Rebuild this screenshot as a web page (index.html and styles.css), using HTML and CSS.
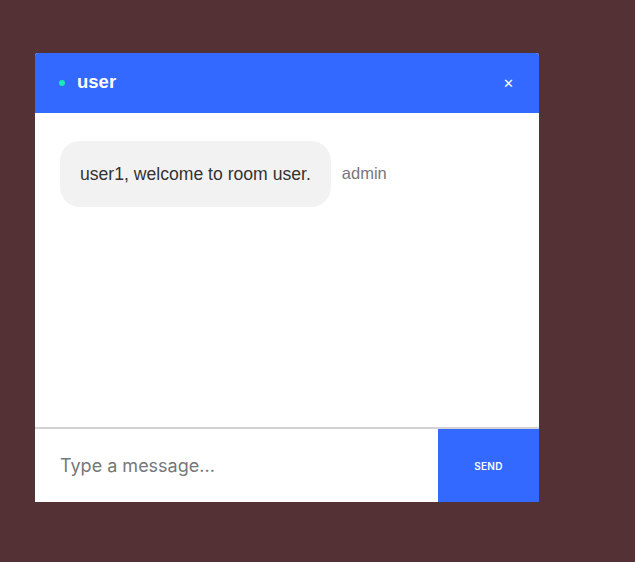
FILE: index.html
```html
<!DOCTYPE html>
<html>
<head>
<meta charset="utf-8">
<link rel="stylesheet" href="styles.css">
</head>
<body>
<div class="chat">
  <div class="chat-header">
    <div class="title"><span class="dot"></span><span class="name">user</span></div>
    <span class="close">&#x2715;</span>
  </div>
  <div class="messages">
    <div class="msg">
      <div class="bubble">user1, welcome to room user.</div>
      <span class="sender">admin</span>
    </div>
  </div>
  <form class="composer">
    <input class="input" type="text" placeholder="Type a message...">
    <button class="send" type="button">SEND</button>
  </form>
</div>
</body>
</html>
```
FILE: styles.css
```css
html, body {
  margin: 0;
  padding: 0;
  background: #543134;
  height: 100%;
}
body {
  padding: 53px 0 0 35px;
  box-sizing: border-box;
  font-family: "Liberation Sans", Arial, sans-serif;
}
.chat {
  width: 504px;
  background: #fff;
  border-radius: 3px 3px 0 0;
  display: flex;
  flex-direction: column;
}
.chat-header {
  height: 60px;
  background: #3369ff;
  border-radius: 3px 3px 0 0;
  display: flex;
  align-items: center;
  justify-content: space-between;
  padding: 0 25px 0 24px;
}
.title {
  display: flex;
  align-items: center;
}
.dot {
  width: 6px;
  height: 6px;
  border-radius: 50%;
  background: #1de9b6;
  margin-right: 12px;
}
.name {
  color: #fff;
  font-weight: bold;
  font-size: 18.5px;
  position: relative;
  top: -1px;
}
.close {
  color: #fff;
  font-size: 13px;
  font-weight: bold;
  font-family: "DejaVu Sans", sans-serif;
}
.messages {
  height: 314px;
  padding: 28px 25px 0;
  box-sizing: border-box;
}
.msg {
  display: flex;
  align-items: flex-start;
}
.bubble {
  background: #f2f2f2;
  border-radius: 20px;
  padding: 0 20px;
  height: 66px;
  line-height: 66px;
  font-size: 17.6px;
  color: #333;
  box-sizing: border-box;
}
.sender {
  margin-left: 11px;
  margin-top: 23px;
  font-size: 16.5px;
  color: #777;
}
.composer {
  margin: 0;
  display: flex;
  border-top: 2px solid #d3d3d3;
  height: 75px;
  box-sizing: border-box;
}
.input {
  flex: 1;
  border: none;
  outline: none;
  padding: 0 25px;
  font-size: 18px;
  font-family: Inter, "Noto Sans", sans-serif;
  color: #333;
  background: #fff;
}
.input::placeholder {
  color: #777;
}
.send {
  width: 101px;
  border: none;
  background: #3369ff;
  color: #fff;
  font-size: 10px;
  font-weight: 600;
  font-family: Inter, sans-serif;
  padding: 0;
  letter-spacing: 0.3px;
}
```
